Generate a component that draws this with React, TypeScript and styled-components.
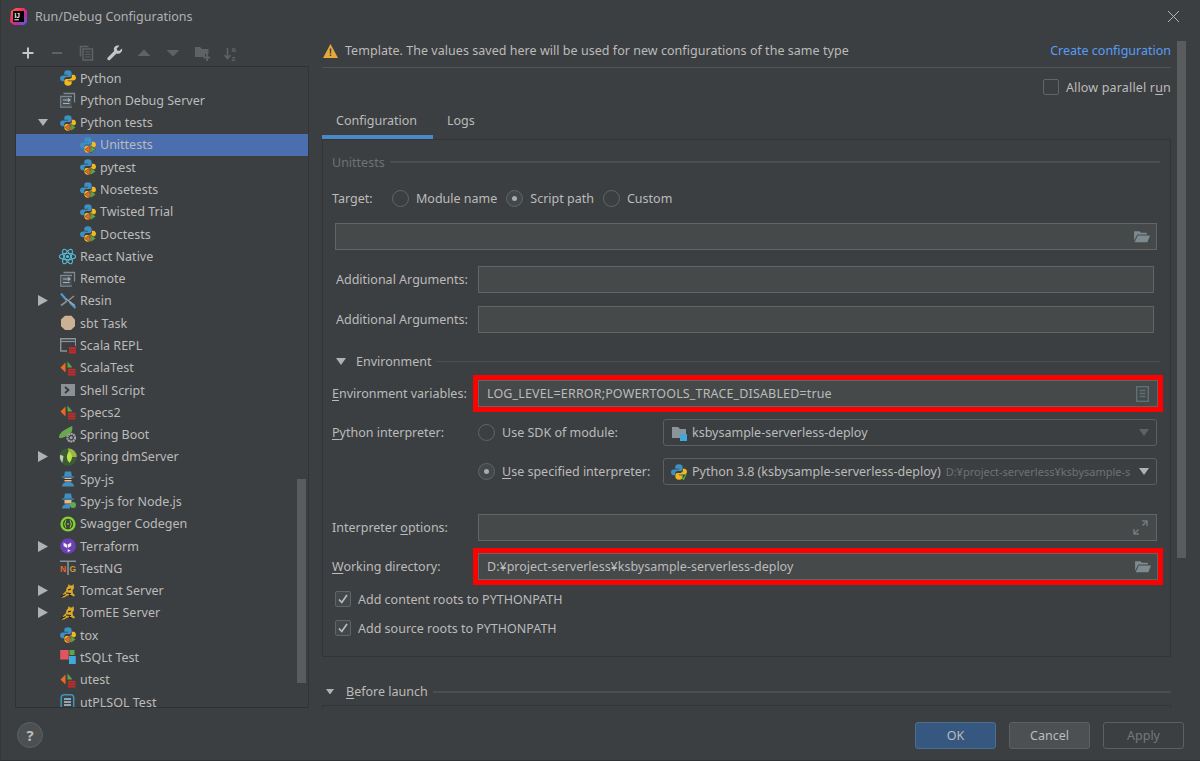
import React from 'react';
import styled, { createGlobalStyle } from 'styled-components';

const GlobalStyle = createGlobalStyle`
  html, body { margin: 0; padding: 0; background: #3c3f41; }
  body { font-family: "Noto Sans", "Liberation Sans", sans-serif; font-size: 12.5px; color: #bbbbbb; }
  u { text-underline-offset: 2px; }
`;

const Dialog = styled.div`
  position: relative;
  width: 1200px;
  height: 761px;
  box-sizing: border-box;
  display: flex;
  flex-direction: column;
  background: #3c3f41;
  border-left: 1px solid #343638;
  border-bottom: 1px solid #2f3133;
  overflow: hidden;
`;

const TitleBar = styled.div`
  height: 34px;
  box-sizing: border-box;
  flex: none;
  display: flex;
  align-items: center;
  padding: 0 20px 2px 9px;
  gap: 8px;
`;

const TitleText = styled.div`
  flex: 1;
  color: #afb1b3;
`;

const Main = styled.div`
  flex: 1;
  min-height: 0;
  display: flex;
  padding-left: 14px;
  gap: 13px;
  overflow: hidden;
`;

const LeftColumn = styled.div`
  width: 294px;
  flex: none;
  display: flex;
  flex-direction: column;
`;

const Toolbar = styled.div`
  height: 32px;
  flex: none;
  display: flex;
  align-items: center;
  padding: 6px 0 0 5px;
  gap: 13px;
  box-sizing: border-box;
`;

const TreeBox = styled.div`
  position: relative;
  flex: 1;
  min-height: 0;
  border: 1px solid #2f3133;
  border-right-color: #323436;
  overflow: hidden;
`;

const TreeRow = styled.div<{ $depth: number; $selected?: boolean }>`
  height: 22.29px;
  display: flex;
  align-items: center;
  padding-left: ${({ $depth }) => 22 + $depth * 20}px;
  background: ${({ $selected }) => ($selected ? '#4b6eaf' : 'transparent')};
  white-space: nowrap;
`;

const Arrow = styled.span`
  width: 21px;
  flex: none;
  display: flex;
  align-items: center;
`;

const IconSlot = styled.span`
  width: 17px;
  flex: none;
  display: flex;
  justify-content: center;
`;

const TreeLabel = styled.span`
  margin-left: 4px;
`;

const ScrollThumb = styled.div<{ $top: number; $height: number; $right: number }>`
  position: absolute;
  top: ${({ $top }) => $top}px;
  right: ${({ $right }) => $right}px;
  width: 9px;
  height: ${({ $height }) => $height}px;
  background: #595b5d;
`;

const RightColumn = styled.div`
  width: 849px;
  flex: none;
  display: flex;
  flex-direction: column;
`;

const Banner = styled.div`
  height: 34px;
  flex: none;
  display: flex;
  align-items: center;
  border-bottom: 1px solid #515355;
  gap: 7px;
  padding-left: 1px;
  box-sizing: border-box;
`;

const BannerText = styled.span`
  flex: 1;
  letter-spacing: 0.035px;
`;

const Link = styled.a`
  color: #589df6;
`;

const OptionsRow = styled.div`
  height: 20px;
  margin-top: 9px;
  flex: none;
  display: flex;
  align-items: center;
  justify-content: flex-end;
  gap: 7px;
`;

const OptionText = styled.span`
  letter-spacing: 0.17px;
`;

const Tabs = styled.div`
  height: 35px;
  margin-top: 7px;
  flex: none;
  display: flex;
`;

const Tab = styled.div<{ $active?: boolean; $w: number }>`
  width: ${({ $w }) => $w}px;
  padding: 1px 0 0 14px;
  display: flex;
  align-items: center;
  box-sizing: border-box;
  border-bottom: 4px solid ${({ $active }) => ($active ? '#4a88c7' : 'transparent')};
`;

const Panel = styled.div`
  height: 518px;
  box-sizing: border-box;
  flex: none;
  border: 1px solid #323436;
  padding: 13px 13px 0 9px;
`;

const GroupTitle = styled.div<{ $mt?: number; $disabled?: boolean; $flush?: boolean }>`
  height: 18px;
  margin-top: ${({ $mt }) => $mt ?? 0}px;
  margin-right: ${({ $flush }) => ($flush ? 0 : -3)}px;
  display: flex;
  align-items: center;
  gap: 5px;
  color: ${({ $disabled }) => ($disabled ? '#6f7173' : '#bbbbbb')};
`;

const GroupLine = styled.div<{ $thick?: boolean }>`
  flex: 1;
  height: ${({ $thick }) => ($thick ? 2 : 1)}px;
  background: #4b4e50;
`;

const Collapse = styled.span`
  width: 19px;
  padding-left: 4px;
  box-sizing: border-box;
  flex: none;
  display: flex;
`;

const Row = styled.div<{ $mt: number; $inset?: number; $h?: number }>`
  height: ${({ $h }) => $h ?? 27}px;
  margin-top: ${({ $mt }) => $mt}px;
  padding-left: ${({ $inset }) => $inset ?? 0}px;
  display: flex;
  align-items: center;
  white-space: nowrap;
`;

const Label = styled.label<{ $w: number; $pad?: number }>`
  width: ${({ $w }) => $w}px;
  padding-left: ${({ $pad }) => $pad ?? 0}px;
  box-sizing: border-box;
  flex: none;
`;

const Field = styled.div<{ $highlight?: boolean; $mr?: number }>`
  flex: 1;
  min-width: 0;
  height: 27px;
  box-sizing: border-box;
  display: flex;
  align-items: center;
  justify-content: space-between;
  margin-right: ${({ $mr, $highlight }) => ($highlight ? -1 : $mr ?? 0)}px;
  padding: 0 6px 0 8px;
  background: #45494a;
  border: 1px solid #646464;
  box-shadow: ${({ $highlight }) => ($highlight ? '0 0 0 5px #ff0000' : 'none')};
`;

const EnvValue = styled.span`
  letter-spacing: 0.15px;
`;

const Combo = styled.div`
  flex: 1;
  min-width: 0;
  height: 27px;
  box-sizing: border-box;
  display: flex;
  align-items: center;
  padding: 0 7px 0 7px;
  gap: 5px;
  border: 1px solid #5e6060;
  border-radius: 3px;
`;

const ComboText = styled.span`
  flex: none;
`;

const ComboHint = styled.span`
  flex: 1;
  min-width: 0;
  font-size: 11px;
  color: #6f7173;
`;

const ComboSpacer = styled.span`
  flex: 1;
`;

const Radio = styled.span<{ $on?: boolean }>`
  width: 17px;
  height: 17px;
  box-sizing: border-box;
  flex: none;
  border-radius: 50%;
  border: 1px solid #646464;
  background: ${({ $on }) => ($on ? '#43494a' : 'transparent')};
  display: flex;
  align-items: center;
  justify-content: center;
  &::after {
    content: '';
    display: ${({ $on }) => ($on ? 'block' : 'none')};
    width: 5px;
    height: 5px;
    border-radius: 50%;
    background: #a9abad;
  }
`;

const RadioOption = styled.span<{ $w?: number }>`
  display: flex;
  align-items: center;
  gap: 7px;
  flex: none;
  width: ${({ $w }) => ($w ? `${$w}px` : 'auto')};
`;

const RadioGroup = styled.div`
  display: flex;
  gap: 9px;
`;

const CheckBox = styled.span<{ $on?: boolean }>`
  width: 16px;
  height: 16px;
  box-sizing: border-box;
  flex: none;
  border: 1px solid #646464;
  border-radius: 2px;
  background: ${({ $on }) => ($on ? '#43494a' : 'transparent')};
  display: flex;
  align-items: center;
  justify-content: center;
`;

const CheckRow = styled.div<{ $mt: number }>`
  height: 18px;
  margin-top: ${({ $mt }) => $mt}px;
  padding-left: 3px;
  display: flex;
  align-items: center;
  gap: 7px;
`;

const NextPanel = styled.div`
  margin-top: 5px;
  height: 10px;
  flex: none;
  border: 1px solid #323436;
`;

const Footer = styled.div`
  height: 52px;
  flex: none;
  display: flex;
  align-items: flex-start;
  justify-content: space-between;
  padding: 14px 16px 0 16px;
  box-sizing: border-box;
`;

const HelpButton = styled.div`
  width: 26px;
  height: 26px;
  box-sizing: border-box;
  border-radius: 50%;
  border: 1px solid #5e6060;
  background: #4c5052;
  display: flex;
  align-items: center;
  justify-content: center;
  font-size: 15px;
  font-weight: 700;
`;

const Buttons = styled.div`
  display: flex;
  gap: 13px;
`;

const Button = styled.div<{ $kind: 'primary' | 'normal' | 'disabled' }>`
  width: 81px;
  height: 27px;
  box-sizing: border-box;
  display: flex;
  align-items: center;
  justify-content: center;
  border-radius: 3px;
  border: 1px solid
    ${({ $kind }) => ($kind === 'primary' ? '#4c708c' : '#5e6060')};
  background: ${({ $kind }) =>
    $kind === 'primary' ? '#365880' : $kind === 'normal' ? '#4c5052' : 'transparent'};
  color: ${({ $kind }) => ($kind === 'disabled' ? '#777777' : '#bbbbbb')};
`;

/* --- icons --- */

const Svg = ({ children, size = 16 }: { children: React.ReactNode; size?: number }) => (
  <svg width={size} height={size} viewBox="0 0 16 16" style={{ flex: 'none', display: 'block' }}>
    {children}
  </svg>
);

const PY_HALF = 'M8 .3C5.200.3 4.300 1.400 4.300 2.900v1.900h3.900v.7H2.700C1.100 5.500 0 6.700 0 8.200s1 3.100 2.500 3.100h1.600V9.400c0-1.300 1.100-2.300 2.300-2.300h3.200c1.100 0 2-.9 2-2V2.900C11.600 1.400 10.400.3 8 .3z';

const PythonMark = () => (
  <>
    <path d={PY_HALF} fill="#3c90c4" />
    <path d={PY_HALF} fill="#f4b81f" transform="rotate(180 8 8)" />
  </>
);

const TestMarks = () => (
  <>
    <path d="M9.800 8.800v7.200L5 12.400z" fill="#e8672a" stroke="#3c3f41" strokeWidth=".5" />
    <path d="M10.800 8.800v7.200l5-3.600z" fill="#5aa845" stroke="#3c3f41" strokeWidth=".5" />
  </>
);

const ScalaMarks = () => (
  <>
    <path d="M5.500 2.500v10L.5 7.500z" fill="#ee6a1f" />
    <path d="M7.500 1.500l5 6h-5z" fill="#57a845" />
    <path d="M8 8.700h7.500v2H8zm0 2.500h7.500v2H8zm0 2.500h7.500v1.800H8z" fill="#c12b2b" />
  </>
);

const WindowIcon = () => (
  <>
    <path d="M3.500 1.500h11v9M12 4.500H.8v10.500h11" fill="none" stroke="#7f8b91" strokeWidth="1.300" />
    <rect x="1.500" y="5" width="10" height="9.500" fill="#4a5358" />
    <path d="M3 8h6.500M8 6.300 10 8 8 9.700M9.500 11.500H3" fill="none" stroke="#a6b2b8" strokeWidth="1.100" />
  </>
);

const icons: Record<string, React.ReactNode> = {
  python: <Svg><PythonMark /></Svg>,
  pytests: <Svg><PythonMark /><TestMarks /></Svg>,
  debug: <Svg><WindowIcon /></Svg>,
  react: (
    <Svg size={17}>
      <g fill="none" stroke="#53c1de" strokeWidth="1">
        <ellipse cx="8" cy="8" rx="7.600" ry="3" />
        <ellipse cx="8" cy="8" rx="7.600" ry="3" transform="rotate(60 8 8)" />
        <ellipse cx="8" cy="8" rx="7.600" ry="3" transform="rotate(120 8 8)" />
      </g>
      <circle cx="8" cy="8" r="1.500" fill="#53c1de" />
    </Svg>
  ),
  resin: (
    <Svg>
      <path d="M1 .5l5.500 6.500M15.500 15L9.500 9" stroke="#4c9bd0" strokeWidth="2.200" />
      <path d="M1 12.500l6-4.500M14 3 9 7" stroke="#8a8f93" strokeWidth="1.600" />
      <path d="M6 6l9 6.500" stroke="#a6abae" strokeWidth="1.200" />
    </Svg>
  ),
  sbt: <Svg><path d="M5 .8h6.500l3.500 4v6.500L11 15H5l-4-3.700V4.500z" fill="#cdb194" /></Svg>,
  scalarepl: (
    <Svg>
      <path d="M7 13H.7V.8h15V8" fill="none" stroke="#8c9397" strokeWidth="1.400" />
      <path d="M1 3.500h14" stroke="#8c9397" strokeWidth="1.200" />
      <path d="M9 9h7v2H9zm0 2.400h7v2H9zm0 2.400h7v1.700H9z" fill="#c12b2b" />
    </Svg>
  ),
  scalatest: <Svg><ScalaMarks /></Svg>,
  shell: (
    <Svg>
      <rect x="1" y="2" width="14" height="12" fill="#8a9296" />
      <path d="M5 5l3.500 3L5 11" fill="none" stroke="#33373a" strokeWidth="1.700" />
    </Svg>
  ),
  springboot: (
    <Svg size={17}>
      <path d="M0 11C0 6 5 3.500 12.500 0c.5 5-1 7-4 8.500C6 10 3 12 0 11z" fill="#6aa84f" />
      <circle cx="11.500" cy="11" r="3.600" fill="none" stroke="#a0a5a8" strokeWidth="2" strokeDasharray="1.800 .5" />
      <circle cx="11.500" cy="11" r="1.400" fill="#a0a5a8" />
    </Svg>
  ),
  dmserver: (
    <Svg size={18}>
      <circle cx="8" cy="8" r="7.800" fill="#3c5a34" />
      <path d="M8 .2a7.800 7.800 0 0 1 7.800 7.800H9z" fill="#9ab54a" />
      <path d="M9 3c3 2 3.500 6 .5 10C6.500 11 6 6 9 3z" fill="#b7e34a" />
      <path d="M3 13a7.800 7.800 0 0 1-2-7l3 1z" fill="#c5c9c4" />
    </Svg>
  ),
  spy: (
    <Svg>
      <path d="M5 .5h6l1 5H4z" fill="#3f8fc0" />
      <path d="M2 5.500h12v1.200H2z" fill="#3f8fc0" />
      <path d="M4.500 7h7v3.500h-7z" fill="#e8b98c" />
      <path d="M4 8h8v1H4z" fill="#333" />
      <path d="M2 15.500c0-3 2-4.500 6-4.500s6 1.500 6 4.500z" fill="#3f8fc0" />
    </Svg>
  ),
  spynode: (
    <Svg>
      <path d="M5 .5h6l1 5H4z" fill="#3f8fc0" />
      <path d="M2 5.500h12v1.200H2z" fill="#3f8fc0" />
      <path d="M4.500 7h7v3.500h-7z" fill="#e8b98c" />
      <path d="M2 15.500c0-3 2-4.500 6-4.500h2v4.500z" fill="#3f8fc0" />
      <circle cx="13" cy="12" r="3" fill="#62a85a" />
    </Svg>
  ),
  swagger: (
    <Svg>
      <circle cx="8" cy="8" r="7.600" fill="#84d32c" />
      <circle cx="8" cy="8" r="5.200" fill="#3b3f41" />
      <path d="M6.300 4.500C5 4.500 5.500 7.500 4.500 8c1 .5.500 3.500 1.800 3.500M9.700 4.500c1.300 0 .8 3 1.800 3.500-1 .5-.5 3.500-1.800 3.500" fill="none" stroke="#84d32c" strokeWidth="1.100" />
      <circle cx="8" cy="8" r=".9" fill="#84d32c" />
    </Svg>
  ),
  terraform: (
    <Svg>
      <circle cx="8" cy="8" r="7.800" fill="#6b3fb5" />
      <path d="M3.500 4.500l3.500 2v3.500l-3.500-2zM7.700 6.500l3.500-2V8L7.700 10zM7.700 11l3 1.700-3 1.300z" fill="#eee" />
    </Svg>
  ),
  testng: (
    <Svg>
      <path d="M0 .5h16v1.600H8.800V15H7.200V2.100H0z" fill="#8b9296" />
      <text x="0" y="12" fontSize="8.500" fontWeight="700" fontFamily="Liberation Sans" fill="#e8672a">N</text>
      <text x="9.500" y="12" fontSize="8.500" fontWeight="700" fontFamily="Liberation Sans" fill="#c99a3a">G</text>
    </Svg>
  ),
  tomcat: (
    <Svg>
      <path d="M3 11l3-3 .5-3L8 3.500 8.500 1 10 2.500h2L13.500 1l.5 4-1.500 2.500.5 3 2 1.500-1 1.500-3-1.500-3.500.5-3.500 2H1l2-2z" fill="#d9a92a" />
      <path d="M.5 14l5-2.500M8 7l3-1M6 10l5 .5M9 11.500l2 2" stroke="#1e1e1e" strokeWidth="1.100" />
    </Svg>
  ),
  tox: <Svg><PythonMark /><TestMarks /></Svg>,
  tsqlt: (
    <Svg>
      <rect x=".2" y="1" width="8.500" height="9.500" fill="#e0555e" />
      <rect x="9.500" y="1" width="5" height="5" fill="#5aa845" />
      <rect x="9" y="7" width="6.800" height="8" fill="#3fa9dc" />
    </Svg>
  ),
  utest: <Svg><ScalaMarks /></Svg>,
  utplsql: (
    <Svg>
      <rect x="1.200" y=".8" width="12.500" height="14.400" rx="3" fill="none" stroke="#3f94bd" strokeWidth="1.500" />
      <path d="M4 4h7v2H4zm0 3h7v2H4zm0 3h7v2H4z" fill="#8fa6b2" />
    </Svg>
  ),
};

const treeItems: { label: string; icon: string; depth: number; arrow?: 'open' | 'closed'; selected?: boolean }[] = [
  { label: 'Python', icon: 'python', depth: 0 },
  { label: 'Python Debug Server', icon: 'debug', depth: 0 },
  { label: 'Python tests', icon: 'pytests', depth: 0, arrow: 'open' },
  { label: 'Unittests', icon: 'pytests', depth: 1, selected: true },
  { label: 'pytest', icon: 'pytests', depth: 1 },
  { label: 'Nosetests', icon: 'pytests', depth: 1 },
  { label: 'Twisted Trial', icon: 'pytests', depth: 1 },
  { label: 'Doctests', icon: 'pytests', depth: 1 },
  { label: 'React Native', icon: 'react', depth: 0 },
  { label: 'Remote', icon: 'debug', depth: 0 },
  { label: 'Resin', icon: 'resin', depth: 0, arrow: 'closed' },
  { label: 'sbt Task', icon: 'sbt', depth: 0 },
  { label: 'Scala REPL', icon: 'scalarepl', depth: 0 },
  { label: 'ScalaTest', icon: 'scalatest', depth: 0 },
  { label: 'Shell Script', icon: 'shell', depth: 0 },
  { label: 'Specs2', icon: 'scalatest', depth: 0 },
  { label: 'Spring Boot', icon: 'springboot', depth: 0 },
  { label: 'Spring dmServer', icon: 'dmserver', depth: 0, arrow: 'closed' },
  { label: 'Spy-js', icon: 'spy', depth: 0 },
  { label: 'Spy-js for Node.js', icon: 'spynode', depth: 0 },
  { label: 'Swagger Codegen', icon: 'swagger', depth: 0 },
  { label: 'Terraform', icon: 'terraform', depth: 0, arrow: 'closed' },
  { label: 'TestNG', icon: 'testng', depth: 0 },
  { label: 'Tomcat Server', icon: 'tomcat', depth: 0, arrow: 'closed' },
  { label: 'TomEE Server', icon: 'tomcat', depth: 0, arrow: 'closed' },
  { label: 'tox', icon: 'tox', depth: 0 },
  { label: 'tSQLt Test', icon: 'tsqlt', depth: 0 },
  { label: 'utest', icon: 'utest', depth: 0 },
  { label: 'utPLSQL Test', icon: 'utplsql', depth: 0 },
];

const TriangleDown = ({ color = '#afb1b3', w = 10 }: { color?: string; w?: number }) => (
  <svg width={w} height={w * 0.7} viewBox="0 0 10 7" style={{ display: 'block' }}>
    <path d="M0 0h10L5 7z" fill={color} />
  </svg>
);

const TriangleRight = () => (
  <svg width="10" height="11" viewBox="0 0 10 11" style={{ display: 'block' }}>
    <path d="M0 0l10 5.500L0 11z" fill="#afb1b3" />
  </svg>
);

const FolderOpen = () => (
  <Svg size={17}>
    <path d="M1 3h5l1.500 1.500H13V6H4L1 12z" fill="#7d8a90" />
    <path d="M4.500 7H16l-2.500 6.500H1.500z" fill="#7d8a90" />
  </Svg>
);

const Check = () => (
  <svg width="12" height="12" viewBox="0 0 12 12">
    <path d="M2 6.500l2.800 3L10 2" fill="none" stroke="#bbbbbb" strokeWidth="1.700" />
  </svg>
);

const ToolPlus = () => <Svg><path d="M2.500 8h11M8 2.500v11" stroke="#c4c6c8" strokeWidth="2" /></Svg>;
const ToolMinus = () => <Svg><path d="M3 8h10" stroke="#5f6264" strokeWidth="2" /></Svg>;
const ToolCopy = () => (
  <Svg>
    <path d="M10.500 1.500H2.500v10" fill="none" stroke="#5f6264" strokeWidth="1.500" />
    <rect x="5" y="4" width="9.500" height="11" fill="none" stroke="#5f6264" strokeWidth="1.500" />
    <path d="M7 7h5.500M7 9.500h5.500M7 12h5.500" stroke="#5f6264" strokeWidth="1.200" />
  </Svg>
);
const ToolWrench = () => (
  <Svg>
    <path d="M15 3.500l-2.800 2.500-2-.5-.5-2L12.500.8C10.500 0 8.500.5 7.500 2c-.8 1.200-.8 2.700-.3 4L.8 12.500c-.7.8-.7 1.700 0 2.300.7.7 1.700.7 2.400 0L9.500 8.400c1.500.6 3.200.3 4.400-.9 1.100-1.100 1.600-2.500 1.100-4z" fill="#c4c6c8" />
  </Svg>
);
const ToolUp = () => <Svg><path d="M1.500 11 8 4.500 14.500 11z" fill="#5f6264" /></Svg>;
const ToolDown = () => <Svg><path d="M1.500 5 8 11.500 14.500 5z" fill="#5f6264" /></Svg>;
const ToolFolder = () => (
  <Svg>
    <path d="M1 2h5l2 2h6.500v5H11v3H1z" fill="#5f6264" />
    <path d="M13 9v7M9.500 12.500h7" stroke="#5f6264" strokeWidth="1.800" />
  </Svg>
);
const ToolSort = () => (
  <Svg>
    <path d="M4.500 3v10M1.500 10l3 3.500 3-3.500" fill="none" stroke="#5f6264" strokeWidth="1.600" />
    <text x="8.500" y="7" fontSize="8" fontWeight="700" fontFamily="Liberation Sans" fill="#5f6264">a</text>
    <text x="8.500" y="15.500" fontSize="8" fontWeight="700" fontFamily="Liberation Sans" fill="#5f6264">z</text>
  </Svg>
);

const AppLogo = () => (
  <svg width="17" height="17" viewBox="0 0 17 17" style={{ flex: 'none' }}>
    <defs>
      <linearGradient id="ij" x1="0" y1="0" x2="1" y2="1">
        <stop offset="0" stopColor="#fe7a3d" />
        <stop offset="0.35" stopColor="#fe315d" />
        <stop offset="0.65" stopColor="#c12a9c" />
        <stop offset="1" stopColor="#3b6cf0" />
      </linearGradient>
    </defs>
    <path d="M1 3l5-3h8l3 3v11l-3 3H4l-4-3z" fill="url(#ij)" />
    <rect x="3" y="3" width="11" height="11" fill="#000" />
    <text x="4.400" y="9.500" fontSize="6.500" fontWeight="700" fontFamily="Liberation Sans" fill="#fff">IJ</text>
    <rect x="4.400" y="11.300" width="4.500" height="1" fill="#fff" />
  </svg>
);

const App = () => (
  <>
    <GlobalStyle />
    <Dialog>
      <TitleBar>
        <AppLogo />
        <TitleText>Run/Debug Configurations</TitleText>
        <svg width="13" height="13" viewBox="0 0 13 13">
          <path d="M1 1l11 11M12 1 1 12" stroke="#b4b6b8" strokeWidth="1" />
        </svg>
      </TitleBar>
      <Main>
        <LeftColumn>
          <Toolbar>
            <ToolPlus />
            <ToolMinus />
            <ToolCopy />
            <ToolWrench />
            <ToolUp />
            <ToolDown />
            <ToolFolder />
            <ToolSort />
          </Toolbar>
          <TreeBox>
            {treeItems.map((item) => (
              <TreeRow key={item.label} $depth={item.depth} $selected={item.selected}>
                <Arrow>
                  {item.arrow === 'open' && <TriangleDown />}
                  {item.arrow === 'closed' && <TriangleRight />}
                </Arrow>
                <IconSlot>{icons[item.icon]}</IconSlot>
                <TreeLabel>{item.label}</TreeLabel>
              </TreeRow>
            ))}
            <ScrollThumb $top={412} $height={204} $right={2} />
          </TreeBox>
        </LeftColumn>
        <RightColumn>
          <Banner>
            <svg width="15" height="14" viewBox="0 0 15 14" style={{ flex: 'none' }}>
              <path d="M7.500 0 15 14H0z" fill="#e5a83b" />
              <path d="M6.800 4.500h1.400v5H6.800zM6.800 10.500h1.400V12H6.800z" fill="#3c3f41" />
            </svg>
            <BannerText>Template. The values saved here will be used for new configurations of the same type</BannerText>
            <Link>Create configuration</Link>
          </Banner>
          <OptionsRow>
            <CheckBox />
            <OptionText>Allow parallel r<u>u</u>n</OptionText>
          </OptionsRow>
          <Tabs>
            <Tab $active $w={111}>Configuration</Tab>
            <Tab $w={60}>Logs</Tab>
          </Tabs>
          <Panel>
            <GroupTitle $disabled>
              Unittests
              <GroupLine $thick />
            </GroupTitle>
            <Row $mt={17} $h={20}>
              <Label $w={60}>Target:</Label>
              <RadioGroup>
                <RadioOption><Radio />Module name</RadioOption>
                <RadioOption><Radio $on />Script path</RadioOption>
                <RadioOption><Radio />Custom</RadioOption>
              </RadioGroup>
            </Row>
            <Row $mt={15} $inset={3}>
              <Field><span /><FolderOpen /></Field>
            </Row>
            <Row $mt={16}>
              <Label $w={146} $pad={4}>Additional Arguments:</Label>
              <Field $mr={3} />
            </Row>
            <Row $mt={13}>
              <Label $w={146} $pad={4}>Additional Arguments:</Label>
              <Field $mr={3} />
            </Row>
            <GroupTitle $mt={19}>
              <Collapse><TriangleDown /></Collapse>
              Environment
              <GroupLine />
            </GroupTitle>
            <Row $mt={10}>
              <Label $w={146}><u>E</u>nvironment variables:</Label>
              <Field $highlight>
                <EnvValue>LOG_LEVEL=ERROR;POWERTOOLS_TRACE_DISABLED=true</EnvValue>
                <svg width="13" height="16" viewBox="0 0 13 16" style={{ marginRight: 2 }}>
                  <rect x=".7" y=".7" width="11.600" height="14.600" fill="none" stroke="#5f7178" strokeWidth="1.400" />
                  <path d="M3.500 4.500h6M3.500 7.500h6M3.500 10.500h6" stroke="#5f7178" strokeWidth="1.300" />
                </svg>
              </Field>
            </Row>
            <Row $mt={12}>
              <Label $w={146}><u>P</u>ython interpreter:</Label>
              <RadioOption $w={185}><Radio />Use SDK of module:</RadioOption>
              <Combo>
                <Svg>
                  <path d="M1 2h6l2 2h6v9H1z" fill="#8a9599" />
                  <rect x="9" y="9" width="7" height="7" fill="#3fa9dc" />
                </Svg>
                <ComboText>ksbysample-serverless-deploy</ComboText>
                <ComboSpacer />
                <TriangleDown color="#5f6264" />
              </Combo>
            </Row>
            <Row $mt={12}>
              <Label $w={146} />
              <RadioOption $w={185}><Radio $on /><span><u>U</u>se specified interpreter:</span></RadioOption>
              <Combo>
                <Svg>
                  <PythonMark />
                  <path d="M10 10l2.500 5.500L15 10" fill="none" stroke="#5aa845" strokeWidth="1.300" />
                </Svg>
                <ComboText>Python 3.8 (ksbysample-serverless-deploy)</ComboText>
                <ComboHint>D:¥project-serverless¥ksbysample-s</ComboHint>
                <TriangleDown />
              </Combo>
            </Row>
            <Row $mt={29}>
              <Label $w={146}>Interpreter <u>o</u>ptions:</Label>
              <Field>
                <span />
                <svg width="15" height="15" viewBox="0 0 15 15" style={{ marginRight: 2 }}>
                  <path d="M9 1h5v5M14 1 9.500 5.500M6 14H1V9M1 14l4.500-4.500" fill="none" stroke="#6f7b80" strokeWidth="1.500" />
                </svg>
              </Field>
            </Row>
            <Row $mt={12}>
              <Label $w={146}><u>W</u>orking directory:</Label>
              <Field $highlight>
                D:¥project-serverless¥ksbysample-serverless-deploy
                <FolderOpen />
              </Field>
            </Row>
            <CheckRow $mt={10}>
              <CheckBox $on><Check /></CheckBox>
              Add content roots to PYTHONPATH
            </CheckRow>
            <CheckRow $mt={11}>
              <CheckBox $on><Check /></CheckBox>
              Add source roots to PYTHONPATH
            </CheckRow>
          </Panel>
          <GroupTitle $mt={26} $flush>
            <Collapse><TriangleDown w={8} /></Collapse>
            <span><u>B</u>efore launch</span>
            <GroupLine $thick />
          </GroupTitle>
          <NextPanel />
        </RightColumn>
      </Main>
      <ScrollThumb $top={41} $height={517} $right={14} />
      <Footer>
        <HelpButton>?</HelpButton>
        <Buttons>
          <Button $kind="primary">OK</Button>
          <Button $kind="normal">Cancel</Button>
          <Button $kind="disabled">Apply</Button>
        </Buttons>
      </Footer>
    </Dialog>
  </>
);

export default App;
